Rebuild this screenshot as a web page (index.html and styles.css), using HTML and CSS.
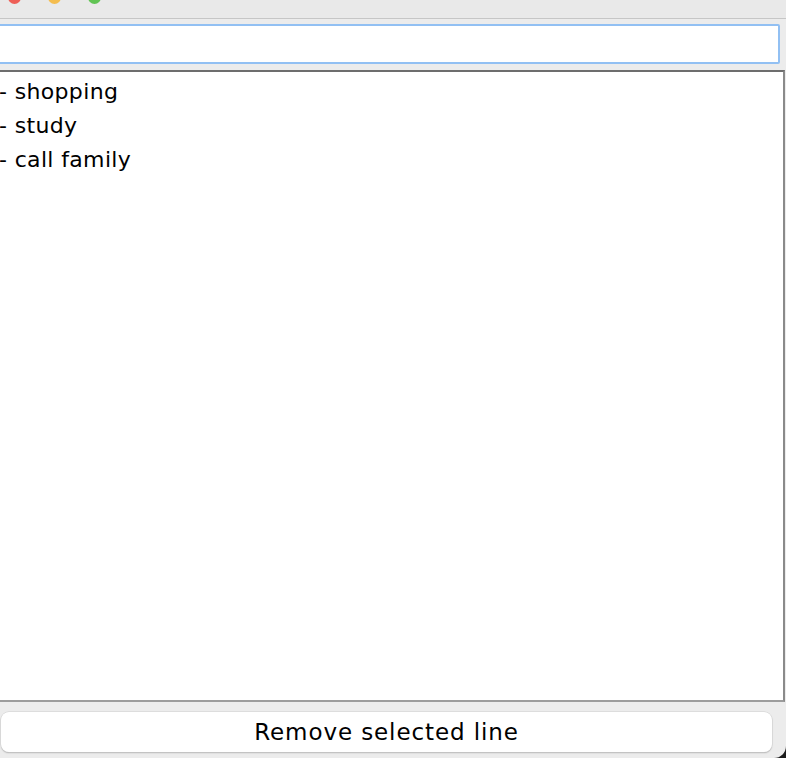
FILE: index.html
```html
<!DOCTYPE html>
<html>
<head>
<meta charset="utf-8">
<link rel="stylesheet" href="styles.css">
</head>
<body>
<div class="window">
  <div class="titlebar">
    <span class="light red"></span>
    <span class="light yellow"></span>
    <span class="light green"></span>
  </div>
  <div class="content">
    <div class="field"></div>
    <div class="area">
      <div class="line">- shopping</div>
      <div class="line">- study</div>
      <div class="line">- call family</div>
    </div>
    <div class="btnrow">
      <div class="button">Remove selected line</div>
    </div>
  </div>
</div>
</body>
</html>
```
FILE: styles.css
```css
html {
  background: #1c1c1c;
}
body {
  margin: 0;
  width: 786px;
  height: 758px;
  overflow: hidden;
}
.window {
  width: 786px;
  height: 758px;
  background: #ececec;
  border-bottom-right-radius: 12px;
  display: flex;
  flex-direction: column;
  overflow: hidden;
  font-family: "DejaVu Sans", "Liberation Sans", sans-serif;
  color: #000;
}
.titlebar {
  height: 18px;
  flex: none;
  background: #e9e9e9;
  border-bottom: 1px solid #c6c6c6;
  display: flex;
  gap: 27px;
  padding-left: 8px;
  align-items: flex-start;
}
.light {
  width: 13px;
  height: 13px;
  border-radius: 50%;
  margin-top: -9px;
}
.red { background: #ee5f57; }
.yellow { background: #f4bd4f; }
.green { background: #61c454; }
.content {
  flex: 1;
  display: flex;
  flex-direction: column;
  padding-top: 5px;
}
.field {
  height: 36px;
  margin-left: -10px;
  width: 786px;
  background: #fff;
  border: 2px solid #92c0f3;
  border-radius: 2px;
  flex: none;
}
.area {
  margin-top: 6px;
  margin-left: -10px;
  width: 795px;
  height: 632px;
  box-sizing: border-box;
  background: #fff;
  border-top: 2px solid #6d6d6d;
  border-right: 2px solid #8a8a8a;
  border-bottom: 2px solid #9c9c9c;
  padding-top: 3px;
  padding-left: 9px;
  flex: none;
}
.line {
  font-size: 22px;
  letter-spacing: 0.35px;
  line-height: 34px;
}
.btnrow {
  padding-top: 10px;
  display: flex;
}
.button {
  width: 771px;
  height: 40px;
  margin-left: 1px;
  background: #fff;
  border-radius: 8px;
  box-shadow: 0 0 0 0.5px #cfcfcf, 0 1px 1.5px rgba(0,0,0,0.28);
  display: flex;
  align-items: center;
  justify-content: center;
  font-size: 23px;
  letter-spacing: 0.9px;
  box-sizing: border-box;
  padding-bottom: 1px;
}
```
